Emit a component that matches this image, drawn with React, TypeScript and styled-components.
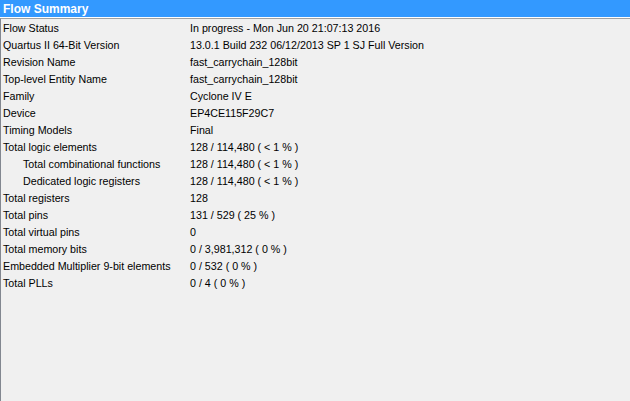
import React from "react";
import styled, { createGlobalStyle } from "styled-components";

const rows: { label: string; value: string; indent?: boolean }[] = [
  { label: "Flow Status", value: "In progress - Mon Jun 20 21:07:13 2016" },
  { label: "Quartus II 64-Bit Version", value: "13.0.1 Build 232 06/12/2013 SP 1 SJ Full Version" },
  { label: "Revision Name", value: "fast_carrychain_128bit" },
  { label: "Top-level Entity Name", value: "fast_carrychain_128bit" },
  { label: "Family", value: "Cyclone IV E" },
  { label: "Device", value: "EP4CE115F29C7" },
  { label: "Timing Models", value: "Final" },
  { label: "Total logic elements", value: "128 / 114,480 ( < 1 % )" },
  { label: "Total combinational functions", value: "128 / 114,480 ( < 1 % )", indent: true },
  { label: "Dedicated logic registers", value: "128 / 114,480 ( < 1 % )", indent: true },
  { label: "Total registers", value: "128" },
  { label: "Total pins", value: "131 / 529 ( 25 % )" },
  { label: "Total virtual pins", value: "0" },
  { label: "Total memory bits", value: "0 / 3,981,312 ( 0 % )" },
  { label: "Embedded Multiplier 9-bit elements", value: "0 / 532 ( 0 % )" },
  { label: "Total PLLs", value: "0 / 4 ( 0 % )" },
];

const GlobalStyle = createGlobalStyle`
  html, body {
    margin: 0;
    padding: 0;
    background: #f0f0f0;
  }
  body {
    font-family: Tahoma, "Liberation Sans", sans-serif;
  }
`;

const Panel = styled.div`
  width: 630px;
  height: 401px;
  display: flex;
  flex-direction: column;
  background: #f0f0f0;
  overflow: hidden;
`;

const Title = styled.div`
  height: 17px;
  background: #3399ff;
  color: #ffffff;
  font-family: Tahoma, "Liberation Sans", sans-serif;
  font-weight: bold;
  font-size: 12px;
  line-height: 18px;
  padding-left: 3px;
  border-bottom: 1px solid #ffffff;
`;

const Body = styled.div`
  flex: 1;
  border-top: 1px solid #a0a0a0;
  border-left: 1px solid #828790;
`;

const Row = styled.div`
  display: grid;
  grid-template-columns: 187px 1fr;
  height: 17px;
  align-items: center;
  font-size: 10.7px;
  color: #000000;
  white-space: nowrap;
`;

const Label = styled.div<{ $indent?: boolean }>`
  padding-left: ${(p) => (p.$indent ? "22px" : "2px")};
`;

const Value = styled.div`
  padding-left: 2px;
`;

export default function App() {
  return (
    <>
      <GlobalStyle />
      <Panel>
        <Title>Flow Summary</Title>
        <Body>
          {rows.map((r) => (
            <Row key={r.label}>
              <Label $indent={r.indent}>{r.label}</Label>
              <Value>{r.value}</Value>
            </Row>
          ))}
        </Body>
      </Panel>
    </>
  );
}
